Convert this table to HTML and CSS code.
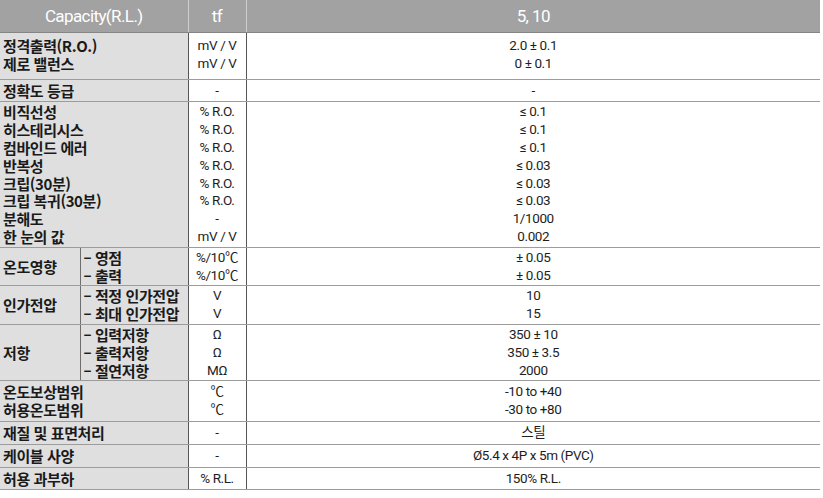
FILE: index.html
```html
<!DOCTYPE html>
<html lang="ko">
<head>
<meta charset="utf-8">
<link rel="stylesheet" href="styles.css">
</head>
<body>
<table class="spec">
  <colgroup>
    <col class="c-lab">
    <col class="c-sub">
    <col class="c-unit">
    <col class="c-val">
  </colgroup>
  <thead>
    <tr class="head">
      <th colspan="2">Capacity(R.L.)</th>
      <th>tf</th>
      <th>5, 10</th>
    </tr>
  </thead>
  <tbody>
    <tr class="r-first">
      <td class="lab" colspan="2">정격출력(R.O.)<br>제로 밸런스</td>
      <td class="unit">mV / V<br>mV / V</td>
      <td class="val">2.0 ± 0.1<br>0 ± 0.1</td>
    </tr>
    <tr class="r-single">
      <td class="lab" colspan="2">정확도 등급</td>
      <td class="unit">-</td>
      <td class="val">-</td>
    </tr>
    <tr class="r-multi">
      <td class="lab" colspan="2">비직선성<br>히스테리시스<br>컴바인드 에러<br>반복성<br>크립(30분)<br>크립 복귀(30분)<br>분해도<br>한 눈의 값</td>
      <td class="unit">% R.O.<br>% R.O.<br>% R.O.<br>% R.O.<br>% R.O.<br>% R.O.<br>-<br>mV / V</td>
      <td class="val">≤ 0.1<br>≤ 0.1<br>≤ 0.1<br>≤ 0.03<br>≤ 0.03<br>≤ 0.03<br>1/1000<br>0.002</td>
    </tr>
    <tr class="r-multi">
      <td class="lab grp">온도영향</td>
      <td class="lab sub">– 영점<br>– 출력</td>
      <td class="unit">%/10℃<br>%/10℃</td>
      <td class="val">± 0.05<br>± 0.05</td>
    </tr>
    <tr class="r-multi">
      <td class="lab grp">인가전압</td>
      <td class="lab sub">– 적정 인가전압<br>– 최대 인가전압</td>
      <td class="unit">V<br>V</td>
      <td class="val">10<br>15</td>
    </tr>
    <tr class="r-multi">
      <td class="lab grp">저항</td>
      <td class="lab sub">– 입력저항<br>– 출력저항<br>– 절연저항</td>
      <td class="unit">Ω<br>Ω<br>MΩ</td>
      <td class="val">350 ± 10<br>350 ± 3.5<br>2000</td>
    </tr>
    <tr class="r-multi r-temp">
      <td class="lab" colspan="2">온도보상범위<br>허용온도범위</td>
      <td class="unit">℃<br>℃</td>
      <td class="val">-10 to +40<br>-30 to +80</td>
    </tr>
    <tr class="r-single">
      <td class="lab" colspan="2">재질 및 표면처리</td>
      <td class="unit">-</td>
      <td class="val">스틸</td>
    </tr>
    <tr class="r-single">
      <td class="lab" colspan="2">케이블 사양</td>
      <td class="unit">-</td>
      <td class="val">Ø5.4 x 4P x 5m (PVC)</td>
    </tr>
    <tr class="r-single">
      <td class="lab" colspan="2">허용 과부하</td>
      <td class="unit">% R.L.</td>
      <td class="val">150% R.L.</td>
    </tr>
  </tbody>
</table>
</body>
</html>
```

FILE: styles.css
```css
html, body {
  margin: 0;
  padding: 0;
  background: #ffffff;
}

.spec {
  width: 820px;
  table-layout: fixed;
  border-collapse: collapse;
  font-family: Roboto, "Noto Sans CJK KR", sans-serif;
  color: #1e1e1e;
}

.c-lab { width: 80px; }
.c-sub { width: 108px; }
.c-unit { width: 58px; }
.c-val { width: 574px; }

.head th {
  height: 32px;
  padding: 0;
  background: #a2a2a2;
  color: #ffffff;
  font-family: Roboto, sans-serif;
  font-weight: 400;
  font-size: 17px;
  letter-spacing: -0.6px;
  text-align: center;
  border-bottom: 1px solid #858585;
  border-left: 1px solid #cfcfcf;
}

.head th:first-child {
  border-left: none;
}

.spec td {
  padding: 1px 0;
  line-height: 17.8px;
  border-top: 1px solid #9c9c9c;
  border-bottom: 1px solid #9c9c9c;
  vertical-align: middle;
}

.r-first td {
  padding: 4px 0 6px;
}

.r-single td {
  padding: 2px 0;
}

.r-temp td {
  padding: 2px 0;
}

.lab {
  background: #dfdfdf;
  font-family: "Noto Sans CJK KR", sans-serif;
  font-weight: 700;
  font-size: 15px;
  letter-spacing: -0.4px;
  padding-left: 3px !important;
  color: #1a1a1a;
  white-space: nowrap;
}

.lab.sub {
  padding-left: 3px !important;
  border-left: 1px solid #6e6e6e;
}

.unit {
  text-align: center;
  font-size: 13.5px;
  letter-spacing: -0.4px;
  background: #ffffff;
  border-left: 1px solid #555555;
  border-right: 1px solid #555555;
}

.val {
  text-align: center;
  font-size: 13.5px;
  letter-spacing: -0.4px;
  background: #ffffff;
}
```
